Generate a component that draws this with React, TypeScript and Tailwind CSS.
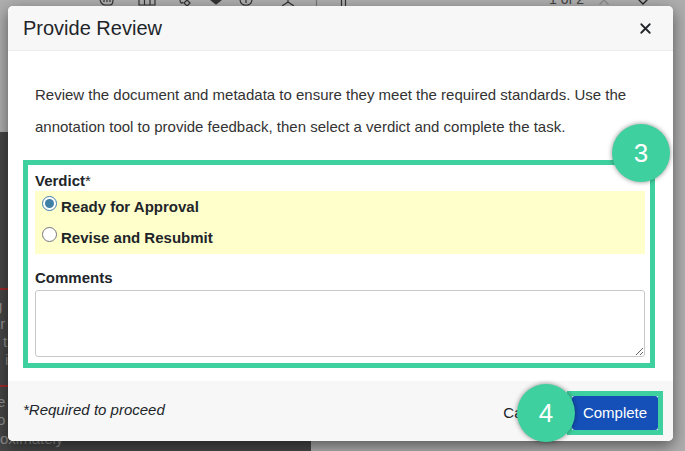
import React from 'react';
import { X, ChevronUp, ChevronDown } from 'lucide-react';

const Badge = ({ n, className }: { n: string; className: string }) => (
  <div className={`absolute w-[58px] h-[58px] rounded-full bg-[#3fd09f] text-white flex items-center justify-center text-[26px] shadow-[0_0_5px_rgba(0,0,0,0.45)] ${className}`}>
    {n}
  </div>
);

// only the bottoms of the toolbar icons peek out above the dialog
const ToolbarIcons = () => (
  <svg width="549" height="6" viewBox="0 0 549 6" fill="none" stroke="#333" strokeWidth="1.2" className="block self-start shrink-0">
    <path d="M100 0c1 3 3 5 5 5h5c2 0 3-2 3-5M104 0v2M107 0v2M110 0v2" />
    <path d="M139 0v5h16V0M144.500 0v5M150 0v5" />
    <path d="M180 0c0 3 2 4 3 2M187 0l-3 3 3 3 3-3-3-3" />
    <path d="M211 0h10l-5 4z" fill="#333" />
    <path d="M240 0c1 7 11 7 12 0M246 0v3" />
    <path d="M288 0v2M288 2l-6 4M288 2l6 4" />
    <path d="M316.500 0v6" stroke="#777" />
    <path d="M341.500 0v6M345.500 0v6" />
  </svg>
);

const RedLine = () => <div className="w-[8px] h-[2px] bg-[#9c2a2a] shrink-0" />;

export default function App() {
  return (
    <div className="relative w-[685px] h-[451px] overflow-hidden bg-[#aeaeae] flex flex-col font-['Liberation_Sans',Arial,sans-serif]">
      {/* page behind the dialog, dimmed */}
      <div className="h-[132px] shrink-0">
        <div className="flex items-end h-[10px] text-[14px] text-[#444]">
          <ToolbarIcons />
          <span>1 of 2</span>
          <ChevronUp size={16} className="ml-[12px] text-[#8a8a8a]" />
          <ChevronDown size={16} className="ml-[23px] text-[#222]" />
        </div>
      </div>
      <div className="flex-1 w-[311px] bg-[#464646] pt-[156px] flex flex-col overflow-hidden text-[15px] leading-[18px] text-[#8f8f8f]">
        <RedLine />
        <div className="mt-[7px] -ml-[6px]">g</div>
        <div className="-ml-[3px]">ir</div>
        <div className="ml-[3px]">t</div>
        <div className="ml-[5px]">i</div>
        <div className="mt-[16px]"><RedLine /></div>
        <div className="mt-[6px] -ml-[3px]">e</div>
        <div className="-ml-[3px]">o</div>
        <div className="mt-[1px]">oximately</div>
      </div>

      <div className="absolute left-[8px] top-[6px] w-[665px] h-[435px] rounded-[5px] bg-white flex flex-col overflow-hidden shadow-[0_5px_15px_rgba(0,0,0,0.5)]">
        <div className="h-[45px] shrink-0 bg-[#f7f7f7] border-b border-[#ebebeb] flex items-center justify-between pl-[15px] pr-[19px]">
          <span className="text-[20px] text-[#212529]">Provide Review</span>
          <X size={17} strokeWidth={2.5} className="text-[#212529]" />
        </div>

        <div className="flex-1 px-[15px]">
          <p className="w-[610px] pl-[12px] pt-[28px] text-[15px] leading-[32px] text-[#333333]">
            Review the document and metadata to ensure they meet the required standards. Use the annotation tool to provide feedback, then select a verdict and complete the task.
          </p>
          <div className="mt-[17px] w-[632px] h-[208px] border-[5px] border-[#3fd09f] px-[7px] pt-[6px]">
            <div className="text-[15px] font-bold text-[#212529] leading-[20px]">
              Verdict<span className="font-normal">*</span>
            </div>
            <div className="bg-[#ffffcc] w-[610px] h-[63px] pl-[7px] text-[15px] font-bold text-[#212529] leading-[20px]">
              <label className="flex items-start h-[31px] pt-[5px] gap-[4px]">
                <input type="radio" name="verdict" defaultChecked className="w-[15px] h-[15px] m-0 accent-[#3f7fa6]" />
                <span className="mt-[1px]">Ready for Approval</span>
              </label>
              <label className="flex items-start h-[31px] pt-[5px] gap-[4px]">
                <input type="radio" name="verdict" className="w-[15px] h-[15px] m-0" />
                <span className="mt-[1px]">Revise and Resubmit</span>
              </label>
            </div>
            <div className="mt-[15px] text-[15px] font-bold text-[#212529] leading-[18px]">Comments</div>
            <textarea className="mt-[3px] block w-[610px] h-[67px] border border-[#c8c8c8] rounded-[3px] bg-white" />
          </div>
        </div>

        <div className="h-[60px] shrink-0 bg-[#f7f7f7] flex items-center justify-between pl-[15px] pr-[10px]">
          <span className="text-[15px] italic text-[#212529] -mt-[2px]">*Required to proceed</span>
          <div className="flex items-center gap-[17px] mt-[4px]">
            <span className="text-[15px] text-[#212529]">Cancel</span>
            <div className="border-[5px] border-[#3fd09f]">
              <button className="block h-[34px] w-[86px] bg-[#1450b8] rounded-[3px] text-white text-[15px]">Complete</button>
            </div>
          </div>
        </div>
      </div>

      <Badge n="3" className="left-[612px] top-[124px]" />
      <Badge n="4" className="left-[517px] top-[384px]" />
    </div>
  );
}
